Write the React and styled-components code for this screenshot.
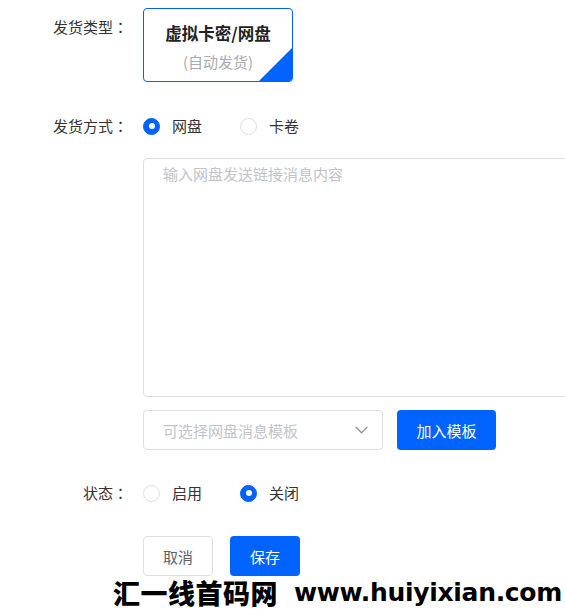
import React, { useState } from "react";
import styled, { createGlobalStyle } from "styled-components";

const BLUE = "#0062ff";

const GlobalStyle = createGlobalStyle`
  html, body {
    margin: 0;
    padding: 0;
    background: #fff;
    overflow: hidden;
  }
  body {
    font-family: "Noto Sans CJK SC", "Noto Sans", sans-serif;
    color: #333;
  }
`;

export default function App() {
  const [method, setMethod] = useState("pan");
  const [status, setStatus] = useState("off");

  return (
    <>
      <GlobalStyle />
      <Form>
        <Row $mb={34}>
          <Label $top={9}>发货类型<Colon>：</Colon></Label>
          <Content>
            <TypeCard>
              <CardTitle>虚拟卡密/网盘</CardTitle>
              <CardSub>(自动发货)</CardSub>
              <Corner />
            </TypeCard>
          </Content>
        </Row>

        <Row $mb={33}>
          <Label>发货方式<Colon>：</Colon></Label>
          <Content>
            <RadioGroup>
              <Radio checked={method === "pan"} onClick={() => setMethod("pan")} label="网盘" />
              <Radio checked={method === "card"} onClick={() => setMethod("card")} label="卡卷" />
            </RadioGroup>
            <TextArea placeholder="输入网盘发送链接消息内容" />
            <SelectRow>
              <Select>
                <SelectText>可选择网盘消息模板</SelectText>
                <svg width="13" height="8" viewBox="0 0 13 8" fill="none">
                  <path d="M1 1.2l5.5 5.5 5.5-5.5" stroke="#909399" strokeWidth="1.3" strokeLinecap="round" strokeLinejoin="round" />
                </svg>
              </Select>
              <PrimaryButton $w={99} $ml={14}>加入模板</PrimaryButton>
            </SelectRow>
          </Content>
        </Row>

        <Row $mb={33}>
          <Label>状态<Colon>：</Colon></Label>
          <Content>
            <RadioGroup>
              <Radio checked={status === "on"} onClick={() => setStatus("on")} label="启用" />
              <Radio checked={status === "off"} onClick={() => setStatus("off")} label="关闭" />
            </RadioGroup>
          </Content>
        </Row>

        <Row $mb={1}>
          <Label />
          <Content>
            <Actions>
              <PlainButton>取消</PlainButton>
              <PrimaryButton $w={70} $ml={17}>保存</PrimaryButton>
            </Actions>
          </Content>
        </Row>

        <Watermark>
          <WmCjk>汇一线首码网</WmCjk>
          <WmLatin>www.huiyixian.com</WmLatin>
        </Watermark>
      </Form>
    </>
  );
}

function Radio({ checked, onClick, label }) {
  return (
    <RadioItem onClick={onClick}>
      <RadioDot $checked={checked} />
      <RadioLabel>{label}</RadioLabel>
    </RadioItem>
  );
}

const Form = styled.div`
  padding-top: 8px;
  font-size: 15px;
`;

const Row = styled.div`
  display: flex;
  align-items: flex-start;
  margin-bottom: ${(p) => p.$mb}px;
`;

const Label = styled.div`
  width: 128px;
  flex-shrink: 0;
  text-align: right;
  padding-top: ${(p) => p.$top || 0}px;
  line-height: 20px;
  font-size: 15px;
  color: #333;
  margin-right: 15px;
`;

const Colon = styled.span`
  font-family: "Noto Sans CJK TC", "Noto Sans CJK SC", sans-serif;
`;

const Content = styled.div`
  display: flex;
  flex-direction: column;
`;

const TypeCard = styled.div`
  position: relative;
  box-sizing: border-box;
  width: 150px;
  height: 74px;
  border: 1px solid ${BLUE};
  border-radius: 4px;
  overflow: hidden;
  display: flex;
  flex-direction: column;
  align-items: center;
  padding-top: 11px;
  cursor: pointer;
`;

const CardTitle = styled.div`
  font-size: 16.5px;
  font-weight: 700;
  line-height: 26px;
  color: #222;
`;

const CardSub = styled.div`
  margin-top: 5px;
  font-size: 15px;
  line-height: 22px;
  color: #a8abb2;
`;

const Corner = styled.div`
  position: absolute;
  right: 0;
  bottom: 0;
  width: 0;
  height: 0;
  border-left: 33px solid transparent;
  border-bottom: 33px solid ${BLUE};
`;

const RadioGroup = styled.div`
  display: flex;
  align-items: center;
  height: 20px;
  gap: 38px;
`;

const RadioItem = styled.label`
  display: flex;
  align-items: center;
  gap: 12px;
  cursor: pointer;
`;

const RadioDot = styled.span`
  box-sizing: border-box;
  width: 17px;
  height: 17px;
  border-radius: 50%;
  border: 1px solid ${(p) => (p.$checked ? BLUE : "#dcdfe6")};
  background: ${(p) => (p.$checked ? BLUE : "#fff")};
  display: flex;
  align-items: center;
  justify-content: center;

  &::after {
    content: "";
    width: 6px;
    height: 6px;
    border-radius: 50%;
    background: #fff;
    display: ${(p) => (p.$checked ? "block" : "none")};
  }
`;

const RadioLabel = styled.span`
  font-size: 15px;
  line-height: 20px;
  color: #333;
`;

const TextArea = styled.textarea`
  box-sizing: border-box;
  margin-top: 22px;
  width: 460px;
  height: 239px;
  padding: 4px 19px;
  border: 1px solid #dcdfe6;
  border-radius: 4px;
  font-family: inherit;
  font-size: 15px;
  line-height: 22px;
  color: #333;
  resize: none;
  outline: none;

  &::placeholder {
    color: #c0c4cc;
  }
`;

const SelectRow = styled.div`
  display: flex;
  align-items: center;
  margin-top: 13px;
`;

const Select = styled.div`
  box-sizing: border-box;
  width: 240px;
  height: 40px;
  border: 1px solid #dcdfe6;
  border-radius: 4px;
  display: flex;
  align-items: center;
  justify-content: space-between;
  padding: 0 14px 0 19px;
  cursor: pointer;
`;

const SelectText = styled.span`
  font-size: 15px;
  color: #c0c4cc;
`;

const PrimaryButton = styled.button`
  box-sizing: border-box;
  width: ${(p) => p.$w}px;
  height: 40px;
  margin-left: ${(p) => p.$ml}px;
  border: none;
  border-radius: 4px;
  background: ${BLUE};
  color: #fff;
  font-family: inherit;
  font-size: 15px;
  cursor: pointer;
`;

const PlainButton = styled.button`
  box-sizing: border-box;
  width: 70px;
  height: 40px;
  border: 1px solid #dcdfe6;
  border-radius: 4px;
  background: #fff;
  color: #606266;
  font-family: inherit;
  font-size: 15px;
  cursor: pointer;
`;

const Actions = styled.div`
  display: flex;
  align-items: center;
`;

const Watermark = styled.div`
  display: flex;
  align-items: center;
  justify-content: flex-end;
  gap: 16px;
  padding-right: 3px;
  height: 31px;
  color: #000;
  white-space: nowrap;
`;

const WmCjk = styled.span`
  font-family: "Noto Sans CJK SC", sans-serif;
  font-weight: 900;
  font-size: 27px;
  line-height: 31px;
  letter-spacing: 0.5px;
`;

const WmLatin = styled.span`
  font-family: "DejaVu Sans", sans-serif;
  font-weight: 700;
  font-size: 25px;
  line-height: 31px;
  letter-spacing: -0.3px;
`;
